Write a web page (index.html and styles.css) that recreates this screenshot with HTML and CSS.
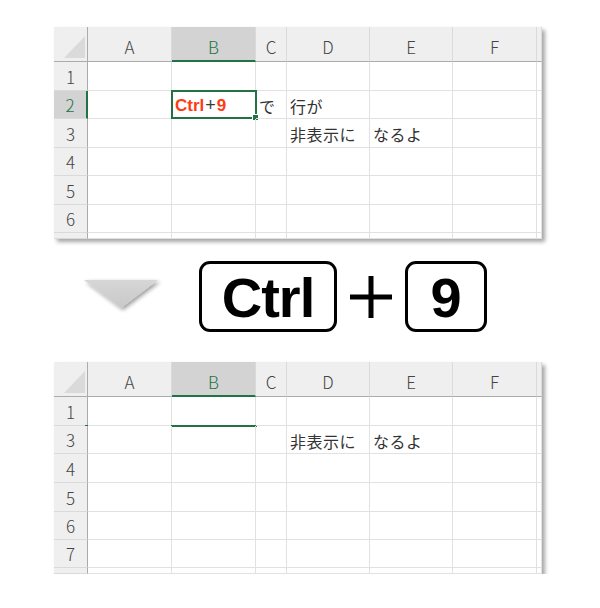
FILE: index.html
```html
<!DOCTYPE html>
<html lang="ja">
<head>
    <meta charset="UTF-8">
    <title>Ctrl+9 で行を非表示</title>
    <link rel="stylesheet" href="styles.css">
</head>
<body>
    <div class="page">
        <!-- before -->
        <div class="sheet">
            <div class="corner"><span class="corner-tri"></span></div>
            <div class="col-head">A</div>
            <div class="col-head active">B</div>
            <div class="col-head">C</div>
            <div class="col-head">D</div>
            <div class="col-head">E</div>
            <div class="col-head">F</div>
            <div class="col-head"></div>

            <div class="row-head">1</div>
            <div class="cell"></div><div class="cell"></div><div class="cell"></div><div class="cell"></div><div class="cell"></div><div class="cell"></div><div class="cell"></div>

            <div class="row-head active">2</div>
            <div class="cell"></div>
            <div class="cell selected"><span class="key-text">Ctrl</span><span class="plus-text">+</span><span class="key-text">9</span></div>
            <div class="cell">で</div>
            <div class="cell">行が</div>
            <div class="cell"></div><div class="cell"></div><div class="cell"></div>

            <div class="row-head">3</div>
            <div class="cell"></div><div class="cell"></div><div class="cell"></div>
            <div class="cell">非表示に</div>
            <div class="cell">なるよ</div>
            <div class="cell"></div><div class="cell"></div>

            <div class="row-head">4</div>
            <div class="cell"></div><div class="cell"></div><div class="cell"></div><div class="cell"></div><div class="cell"></div><div class="cell"></div><div class="cell"></div>
            <div class="row-head">5</div>
            <div class="cell"></div><div class="cell"></div><div class="cell"></div><div class="cell"></div><div class="cell"></div><div class="cell"></div><div class="cell"></div>
            <div class="row-head">6</div>
            <div class="cell"></div><div class="cell"></div><div class="cell"></div><div class="cell"></div><div class="cell"></div><div class="cell"></div><div class="cell"></div>
            <div class="row-head"></div>
            <div class="cell"></div><div class="cell"></div><div class="cell"></div><div class="cell"></div><div class="cell"></div><div class="cell"></div><div class="cell"></div>
        </div>

        <div class="middle">
            <svg class="arrow" width="80" height="38" viewBox="0 0 80 38">
                <defs>
                    <linearGradient id="arrowFill" x1="0" y1="0" x2="0" y2="1">
                        <stop offset="0" stop-color="#d6d6d6"/>
                        <stop offset="1" stop-color="#c9c9c9"/>
                    </linearGradient>
                    <filter id="arrowShadow" x="-20%" y="-20%" width="150%" height="170%">
                        <feGaussianBlur in="SourceAlpha" stdDeviation="2"/>
                        <feOffset dx="2" dy="2"/>
                        <feComponentTransfer><feFuncA type="linear" slope="0.4"/></feComponentTransfer>
                        <feMerge><feMergeNode/><feMergeNode in="SourceGraphic"/></feMerge>
                    </filter>
                </defs>
                <polygon points="1,2 75,2 38,30" fill="url(#arrowFill)" filter="url(#arrowShadow)"/>
            </svg>
            <div class="key key-ctrl">Ctrl</div>
            <svg class="plus" width="42" height="42" viewBox="0 0 42 42">
                <rect x="0" y="18.5" width="42" height="5" fill="#000"/>
                <rect x="18.5" y="0" width="5" height="42" fill="#000"/>
            </svg>
            <div class="key key-nine">9</div>
        </div>

        <!-- after -->
        <div class="sheet sheet-after">
            <div class="corner"><span class="corner-tri"></span></div>
            <div class="col-head">A</div>
            <div class="col-head active">B</div>
            <div class="col-head">C</div>
            <div class="col-head">D</div>
            <div class="col-head">E</div>
            <div class="col-head">F</div>
            <div class="col-head"></div>

            <div class="row-head hidden-mark">1</div>
            <div class="cell"></div><div class="cell hidden-line"></div><div class="cell"></div><div class="cell"></div><div class="cell"></div><div class="cell"></div><div class="cell"></div>

            <div class="row-head">3</div>
            <div class="cell"></div><div class="cell"></div><div class="cell"></div>
            <div class="cell">非表示に</div>
            <div class="cell">なるよ</div>
            <div class="cell"></div><div class="cell"></div>

            <div class="row-head">4</div>
            <div class="cell"></div><div class="cell"></div><div class="cell"></div><div class="cell"></div><div class="cell"></div><div class="cell"></div><div class="cell"></div>
            <div class="row-head">5</div>
            <div class="cell"></div><div class="cell"></div><div class="cell"></div><div class="cell"></div><div class="cell"></div><div class="cell"></div><div class="cell"></div>
            <div class="row-head">6</div>
            <div class="cell"></div><div class="cell"></div><div class="cell"></div><div class="cell"></div><div class="cell"></div><div class="cell"></div><div class="cell"></div>
            <div class="row-head">7</div>
            <div class="cell"></div><div class="cell"></div><div class="cell"></div><div class="cell"></div><div class="cell"></div><div class="cell"></div><div class="cell"></div>
            <div class="row-head"></div>
            <div class="cell"></div><div class="cell"></div><div class="cell"></div><div class="cell"></div><div class="cell"></div><div class="cell"></div><div class="cell"></div>
        </div>
    </div>
</body>
</html>
```

FILE: styles.css
```css
body {
    margin: 0;
    background: #fff;
    font-family: "Noto Sans CJK JP", "Noto Sans", sans-serif;
}
.page {
    padding: 27px 0 0 54px;
}
.sheet {
    display: grid;
    grid-template-columns: 34px 84px 84px 31px 83px 83px 84px 5px;
    grid-template-rows: 35px 29px 28px 29px 28px 29px 28px 6px;
    width: 488px;
    background: #fff;
    box-shadow: 3px 3px 4px rgba(0,0,0,0.35);
    overflow: hidden;
}
.sheet-after {
    grid-template-rows: 35px 29px 28px 29px 29px 28px 28px 6px;
}
.corner {
    position: relative;
    background: #efefef;
    border-right: 1px solid #ababab;
    border-bottom: 1px solid #ababab;
}
.corner-tri {
    position: absolute;
    right: 2px;
    bottom: 3px;
    width: 0;
    height: 0;
    border-left: 21px solid transparent;
    border-bottom: 22px solid #dadada;
}
.col-head {
    background: #efefef;
    border-right: 1px solid #dadada;
    border-bottom: 1px solid #ababab;
    color: #444;
    font-size: 17px;
    font-weight: 300;
    display: flex;
    align-items: center;
    justify-content: center;
    padding-top: 4px;
    box-sizing: border-box;
}
.col-head.active {
    background: #d3d3d3;
    color: #217346;
    border-bottom: 2px solid #217346;
    padding-top: 5px;
}
.row-head {
    position: relative;
    background: #efefef;
    border-right: 1px solid #ababab;
    border-bottom: 1px solid #dadada;
    color: #444;
    font-size: 17px;
    font-weight: 300;
    display: flex;
    align-items: center;
    justify-content: center;
    box-sizing: border-box;
}
.row-head.active {
    background: #d3d3d3;
    color: #217346;
    border-right: 2px solid #217346;
}
.hidden-mark::after {
    content: "";
    position: absolute;
    right: -1px;
    bottom: -2px;
    width: 3px;
    height: 2px;
    background: #217346;
}
.cell {
    position: relative;
    border-right: 1px solid #e1e1e1;
    border-bottom: 1px solid #e1e1e1;
    box-sizing: border-box;
    font-size: 16px;
    letter-spacing: 0.5px;
    color: #333;
    white-space: nowrap;
    display: flex;
    align-items: center;
    padding: 2px 0 0 3px;
}
.cell.selected::before {
    content: "";
    position: absolute;
    left: -1px;
    top: -1px;
    right: -2px;
    bottom: -1px;
    border: 2px solid #217346;
}
.cell.selected::after {
    content: "";
    position: absolute;
    right: -4px;
    bottom: -3px;
    width: 5px;
    height: 5px;
    background: #217346;
    border: 1px solid #fff;
}
.cell.hidden-line::after {
    content: "";
    position: absolute;
    left: -1px;
    right: -2px;
    bottom: -2px;
    height: 2px;
    background: #217346;
}
.key-text {
    font-family: "Liberation Sans", Arial, sans-serif;
    font-weight: bold;
    font-size: 17px;
    letter-spacing: 0;
    color: #ff3b14;
}
.plus-text {
    font-family: "Liberation Sans", Arial, sans-serif;
    font-size: 18px;
    letter-spacing: 0;
    color: #3a3a3a;
    margin: 0 1px;
}
.middle {
    display: flex;
    align-items: center;
    padding: 22px 0 30px;
}
.arrow {
    display: block;
    margin-left: 29px;
    margin-top: 1px;
}
.key {
    height: 71px;
    box-sizing: border-box;
    border: 3px solid #000;
    border-radius: 11px;
    display: flex;
    align-items: center;
    justify-content: center;
    font-family: "Liberation Sans", Arial, sans-serif;
    font-weight: bold;
    font-size: 56px;
    color: #000;
    padding-top: 2px;
}
.key-ctrl {
    width: 138px;
    margin-left: 36px;
    letter-spacing: -1px;
}
.plus {
    display: block;
    margin: 0 13px;
}
.key-nine {
    width: 82px;
}
```
